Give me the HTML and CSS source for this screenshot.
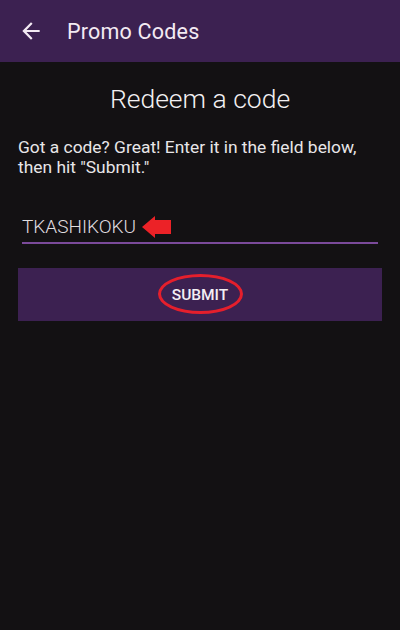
FILE: index.html
```html
<!DOCTYPE html>
<html>
<head>
<meta charset="utf-8">
<link rel="stylesheet" href="styles.css">
</head>
<body>
<div class="app">
  <header class="bar">
    <svg class="back" width="26" height="26" viewBox="0 0 24 24"><path d="M20 11H7.83l5.59-5.59L12 4l-8 8 8 8 1.41-1.41L7.83 13H20v-2z" fill="#f3eaf3"/></svg>
    <span class="bar-title">Promo Codes</span>
  </header>
  <main class="content">
    <h1 class="title">Redeem a code</h1>
    <p class="desc">Got a code? Great! Enter it in the field below, then hit "Submit."</p>
    <div class="field">
      <span class="code">TKASHIKOKU</span>
      <svg class="arrow" width="30" height="22" viewBox="0 0 30 22"><path d="M0 11 L13 0 L13 4 L29 4 L29 18 L13 18 L13 22 Z" fill="#ec2227"/></svg>
    </div>
    <div class="btn">
      <span class="btn-label">SUBMIT</span>
      <span class="ring"></span>
    </div>
  </main>
</div>
</body>
</html>
```
FILE: styles.css
```css
html, body { margin: 0; padding: 0; }
body { background: #131113; font-family: Roboto, "Noto Sans", sans-serif; width: 400px; height: 630px; overflow: hidden; }
.app { display: flex; flex-direction: column; height: 630px; }
.bar { height: 62px; background: #3c2151; display: flex; align-items: center; padding-left: 18px; box-sizing: border-box; }
.back { margin-right: 23px; }
.bar-title { color: #f3eaf3; font-size: 21.5px; letter-spacing: 0.2px; }
.content { padding: 0 18px; display: flex; flex-direction: column; }
.title { margin: 20px 0 0; text-align: center; font-weight: 300; font-size: 26.5px; color: #f2f0f2; line-height: 34px; }
.desc { margin: 21px 0 0; color: #e8e6e8; font-size: 17.4px; line-height: 20px; font-weight: 400; letter-spacing: 0; }
.field { margin: 35px 4px 0; border-bottom: 2px solid #7b4a9a; height: 32px; display: flex; align-items: center; padding-bottom: 2px; box-sizing: border-box; }
.code { color: #e0dee0; font-size: 19px; font-weight: 300; }
.arrow { margin-left: 6px; margin-top: 2px; }
.btn { margin-top: 24px; height: 53px; background: #3c2151; display: flex; align-items: center; justify-content: center; position: relative; }
.btn-label { color: #f3eef3; font-size: 15.5px; font-weight: 500; letter-spacing: 0; }
.ring { position: absolute; left: 140px; top: 6px; width: 79px; height: 34px; border: 3px solid #e51f2c; border-radius: 50%; }
```
